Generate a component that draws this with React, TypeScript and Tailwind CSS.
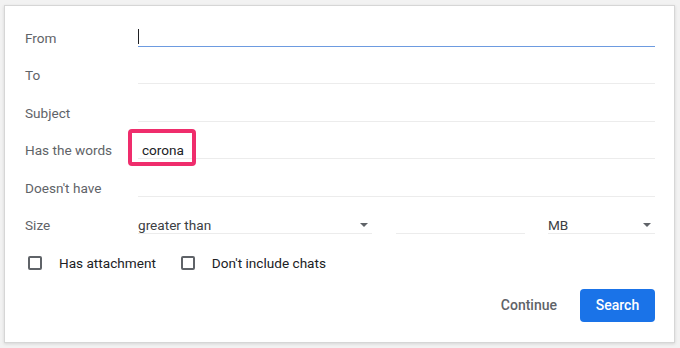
import React from 'react';

const labelCls = 'w-[113px] shrink-0 text-[13.6px] text-[#5f6368]';

const Arrow = () => (
  <svg width="8" height="4" viewBox="0 0 8 4" className="shrink-0">
    <path d="M0 0 L8 0 L4 4 Z" fill="#5f6368" />
  </svg>
);

const Field: React.FC<{ active?: boolean; children?: React.ReactNode }> = ({ active, children }) => (
  <div className={`flex-1 h-[18px] flex items-center border-b ${active ? 'border-[#6d9be0]' : 'border-[#ececec]'}`}>
    {children}
  </div>
);

const Row: React.FC<{ label: string; children: React.ReactNode }> = ({ label, children }) => (
  <div className="h-[37.5px] flex items-center">
    <div className={labelCls}>{label}</div>
    {children}
  </div>
);

const Checkbox: React.FC<{ label: string }> = ({ label }) => (
  <label className="flex items-center">
    <span className="w-[14px] h-[14px] border-2 border-[#5f6368] rounded-[2px] ml-[3px]" />
    <span className="ml-[17px] text-[13.6px] text-[#202124]">{label}</span>
  </label>
);

export default function App() {
  return (
    <div className="w-[680px] h-[348px] bg-[#f2f2f2] pt-[5px] pl-[4px]" style={{ fontFamily: 'Roboto, "Liberation Sans", sans-serif' }}>
      <div className="w-[671px] h-[338px] bg-white border border-[#d6d6d6] shadow-[0_1px_3px_rgba(0,0,0,0.12)] pt-[13px] pl-[20px] pr-[19px]">
        <Row label="From">
          <Field active>
            <span className="w-px h-[15px] bg-[#202124] -mt-[2px]" />
          </Field>
        </Row>
        <Row label="To"><Field /></Row>
        <Row label="Subject"><Field /></Row>
        <Row label="Has the words">
          <Field>
            <div className="relative pl-[4px] text-[13.6px] text-[#202124]">
              corona
              <div className="absolute left-[-10px] top-[-11px] w-[68px] h-[37px] border-4 border-[#ef2d6c] rounded-[4px]" />
            </div>
          </Field>
        </Row>
        <Row label="Doesn't have"><Field /></Row>
        <Row label="Size">
          <div className="flex-1 flex items-center">
            <div className="w-[234px] h-[18px] flex items-center justify-between border-b border-[#ececec] pr-[4px] text-[13.6px] text-[#3c4043]">
              greater than
              <Arrow />
            </div>
            <div className="w-[129px] h-[18px] ml-[24px] border-b border-[#ececec]" />
            <div className="flex-1 h-[18px] ml-[23px] flex items-center justify-between border-b border-[#ececec] pr-[4px] text-[13.6px] text-[#3c4043]">
              MB
              <Arrow />
            </div>
          </div>
        </Row>
        <div className="h-[37.5px] flex items-center gap-[22px]">
          <Checkbox label="Has attachment" />
          <Checkbox label="Don't include chats" />
        </div>
        <div className="flex justify-end items-center mt-[7px]">
          <button className="text-[14px] font-medium text-[#5f6368] mr-[23px]">Continue</button>
          <button className="w-[75px] h-[33px] rounded-[4px] bg-[#1a73e8] text-white text-[14px] font-medium">Search</button>
        </div>
      </div>
    </div>
  );
}
